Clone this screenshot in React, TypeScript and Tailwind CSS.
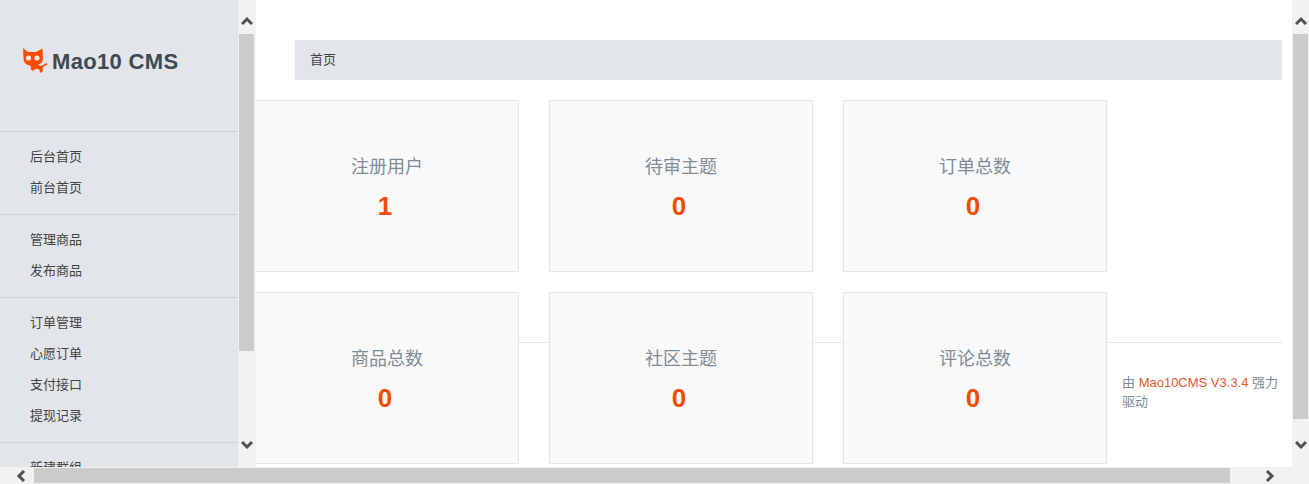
import React from 'react';

const menu = [
  ['后台首页', '前台首页'],
  ['管理商品', '发布商品'],
  ['订单管理', '心愿订单', '支付接口', '提现记录'],
  ['新建群组', '管理群组'],
];

const cards = [
  ['注册用户', '1'],
  ['待审主题', '0'],
  ['订单总数', '0'],
  ['商品总数', '0'],
  ['社区主题', '0'],
  ['评论总数', '0'],
];

function Chevron({ rotate }: { rotate: string }) {
  return (
    <svg width="12" height="12" viewBox="0 0 12 12" className={rotate}>
      <path d="M1 9 L6 4 L11 9" fill="none" stroke="#505050" strokeWidth="3" />
    </svg>
  );
}

function VScroll({ thumb, width }: { thumb: string; width: string }) {
  return (
    <div className={`${width} shrink-0 bg-[#f1f1f1] pl-px flex flex-col`}>
      <div className="h-[34px] w-[15px] flex items-end justify-center pb-[7px]">
        <Chevron rotate="" />
      </div>
      <div className={`w-[15px] bg-[#cbcbcb] ${thumb}`} />
      <div className="flex-1" />
      <div className="h-[34px] w-[15px] flex items-start justify-center pt-[6px]">
        <Chevron rotate="rotate-180" />
      </div>
    </div>
  );
}

function CatLogo() {
  return (
    <svg width="26" height="26" viewBox="0 0 26 26" className="shrink-0">
      <path
        d="M1 1 L6 5 L14 5 L20.5 1.5 L21 12 C21 15 18.5 17 16 18 L19 19 L25 16 L25.5 17.5 L21 20 L20.5 24.5 L18.5 26 L17 22 L13 22 L11 24 L8.5 22 C9 20.5 9 19 8 18.5 C4 18 1.5 15.5 1.5 11 Z"
        fill="#fb4c07"
      />
      <circle cx="6.5" cy="11" r="2.6" fill="#f5e8e2" />
      <circle cx="15" cy="11" r="2.6" fill="#f5e8e2" />
    </svg>
  );
}

export default function App() {
  return (
    <div className="w-[1309px] h-[484px] overflow-hidden flex flex-col bg-white font-['Liberation_Sans','Noto_Sans_CJK_SC',sans-serif]">
      <div className="flex h-[467px]">
        {/* sidebar */}
        <aside className="w-[238px] shrink-0 bg-[#e2e5ea] overflow-hidden">
          <div className="h-[131px] pl-[22px] pt-[47px] flex items-start gap-[4px]">
            <CatLogo />
            <span className="text-[22px] leading-[30px] font-bold tracking-[0.33px] text-[#41494f]">Mao10 CMS</span>
          </div>
          {menu.map((group) => (
            <div key={group[0]} className="border-t border-[#cdd0d5] pt-[9px] pb-[11px]">
              {group.map((item) => (
                <div key={item} className="h-[31px] pl-[30px] text-[13px] leading-[31px] text-[#444]">
                  {item}
                </div>
              ))}
            </div>
          ))}
        </aside>
        <VScroll thumb="h-[317px]" width="w-[18px]" />

        {/* main */}
        <main className="relative flex-1 overflow-hidden">
          <div className="mt-[40px] ml-[39px] mr-[10px] h-[40px] bg-[#e2e5ea] pl-[15px] text-[13px] leading-[40px] text-[#444]">
            首页
          </div>
          <div className="relative z-10 mt-[20px] -ml-px grid grid-cols-[264px_264px_264px] gap-x-[30px] gap-y-[20px]">
            {cards.map(([label, value]) => (
              <div key={label} className="h-[172px] border border-[#e5e5e5] bg-[#f9f9f9] text-center pt-[53px]">
                <div className="text-[18px] leading-[26px] text-[#7f8c97]">{label}</div>
                <div className="mt-[10px] pr-[4px] text-[26px] leading-[32px] font-bold text-[#f24c00]">{value}</div>
              </div>
            ))}
          </div>
          {/* footer sits behind the cards */}
          <div className="absolute left-[0px] right-[10px] top-[342px] border-t border-[#e5e5e5] pl-[866px] pt-[30px] text-[13px] leading-[19px] text-[#7b8a94]">
            由 <span className="text-[#e2562a]">Mao10CMS V3.3.4</span> 强力驱动
          </div>
        </main>
        <VScroll thumb="h-[385px]" width="w-[17px]" />
      </div>

      {/* bottom scrollbar */}
      <div className="h-[17px] bg-[#f1f1f1] flex items-center">
        <div className="w-[34px] flex justify-end pr-[7px]">
          <Chevron rotate="-rotate-90" />
        </div>
        <div className="w-[1196px] h-[15px] bg-[#cbcbcb]" />
        <div className="flex-1 flex justify-end pr-[33px]">
          <Chevron rotate="rotate-90" />
        </div>
      </div>
    </div>
  );
}
